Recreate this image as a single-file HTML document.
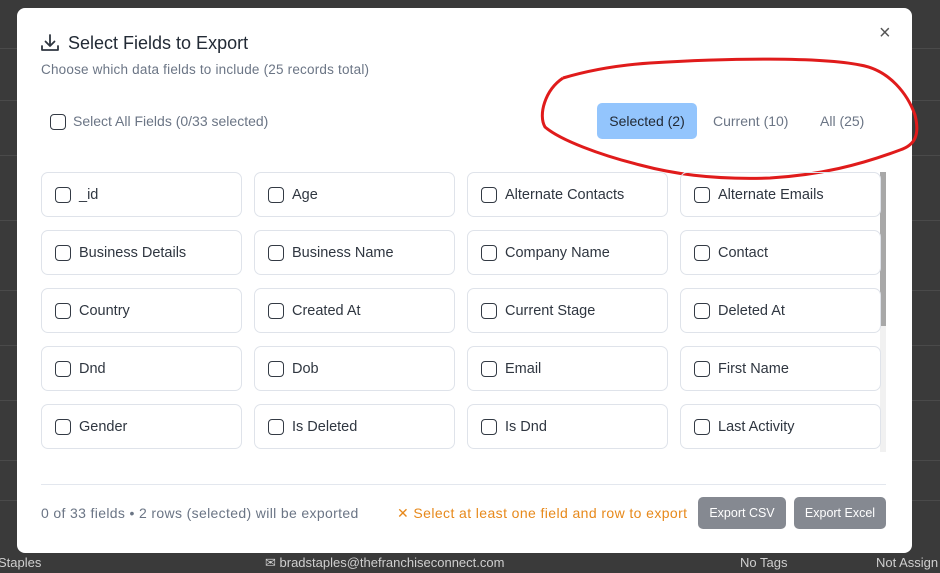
<!DOCTYPE html><html><head><style>
*{box-sizing:border-box}body{margin:0;width:940px;height:573px;background:#3a3a3a;font-family:"Liberation Sans",sans-serif;position:relative;overflow:hidden}
.bgrow{position:absolute;left:0;right:0;height:1px;background:#4a4a4a}
.bgt{position:absolute;color:#cfcfcf;font-size:13px}
.modal{position:absolute;left:17px;top:8px;width:895px;height:545px;background:#fff;border-radius:8px}
.t{position:absolute;white-space:nowrap}
.cb{position:absolute;width:16px;height:16px;border:1.5px solid #333a44;border-radius:4px}
.card{position:absolute;width:201px;height:45px;border:1px solid #dfe3ea;border-radius:7px}
.card .cb{left:13px;top:14px}
.card span{position:absolute;left:37px;top:14px;font-size:14.5px;color:#2f3640}
.btn{position:absolute;height:32px;top:497px;background:#858991;color:#fff;font-size:12.5px;border-radius:5px;text-align:center;line-height:32px}
</style></head><body>
<div class="bgrow" style="top:48px"></div><div class="bgrow" style="top:100px"></div><div class="bgrow" style="top:155px"></div><div class="bgrow" style="top:220px"></div><div class="bgrow" style="top:290px"></div><div class="bgrow" style="top:345px"></div><div class="bgrow" style="top:400px"></div><div class="bgrow" style="top:460px"></div><div class="bgrow" style="top:500px"></div>
<div class="bgt" style="left:-2px;top:555px">Staples</div>
<div class="bgt" style="left:265px;top:555px">✉ bradstaples@thefranchiseconnect.com</div>
<div class="bgt" style="left:740px;top:555px">No Tags</div>
<div class="bgt" style="left:876px;top:555px">Not Assign</div>
<div class="modal"></div>
<svg class="t" style="left:40px;top:33px" width="20" height="20" viewBox="0 0 20 20" fill="none" stroke="#2f3640" stroke-width="1.8" stroke-linecap="round" stroke-linejoin="round"><path d="M10 2v11M5.5 8.5L10 13l4.5-4.5M2 13v4h16v-4"/></svg>
<div class="t" style="left:68px;top:33px;font-size:18px;color:#222a35">Select Fields to Export</div>
<div class="t" style="left:41px;top:62px;font-size:13.5px;color:#6b7585;letter-spacing:0.2px">Choose which data fields to include (25 records total)</div>
<div class="t" style="left:879px;top:22px;font-size:20px;color:#555">×</div>
<div class="cb" style="left:50px;top:114px"></div>
<div class="t" style="left:73px;top:113px;font-size:14px;color:#6b7585">Select All Fields (0/33 selected)</div>
<div class="t" style="left:597px;top:103px;width:100px;height:36px;background:#93c5fd;border-radius:5px;font-size:14px;color:#222a35;text-align:center;line-height:36px">Selected (2)</div>
<div class="t" style="left:713px;top:113px;font-size:14px;color:#6b7585">Current (10)</div>
<div class="t" style="left:820px;top:113px;font-size:14px;color:#6b7585">All (25)</div>
<svg class="t" style="left:530px;top:55px" width="400" height="135" viewBox="0 0 400 135" fill="none" stroke="#e01b1b" stroke-width="3"><path d="M33 23C60 15 90 10 120 8C200 3 290 2 330 10C360 15 378 40 385 60C390 80 385 90 370 95C330 110 290 120 240 123C180 125 140 118 110 110C70 100 30 85 15 72C8 60 15 35 33 23"/></svg>
<div style="position:absolute;left:880px;top:172px;width:6px;height:280px;background:#f1f1f1"></div>
<div style="position:absolute;left:880px;top:172px;width:6px;height:154px;background:#a8a8a8"></div>
<div class="card" style="left:41px;top:172px"><i class="cb"></i><span>_id</span></div>
<div class="card" style="left:254px;top:172px"><i class="cb"></i><span>Age</span></div>
<div class="card" style="left:467px;top:172px"><i class="cb"></i><span>Alternate Contacts</span></div>
<div class="card" style="left:680px;top:172px"><i class="cb"></i><span>Alternate Emails</span></div>
<div class="card" style="left:41px;top:230px"><i class="cb"></i><span>Business Details</span></div>
<div class="card" style="left:254px;top:230px"><i class="cb"></i><span>Business Name</span></div>
<div class="card" style="left:467px;top:230px"><i class="cb"></i><span>Company Name</span></div>
<div class="card" style="left:680px;top:230px"><i class="cb"></i><span>Contact</span></div>
<div class="card" style="left:41px;top:288px"><i class="cb"></i><span>Country</span></div>
<div class="card" style="left:254px;top:288px"><i class="cb"></i><span>Created At</span></div>
<div class="card" style="left:467px;top:288px"><i class="cb"></i><span>Current Stage</span></div>
<div class="card" style="left:680px;top:288px"><i class="cb"></i><span>Deleted At</span></div>
<div class="card" style="left:41px;top:346px"><i class="cb"></i><span>Dnd</span></div>
<div class="card" style="left:254px;top:346px"><i class="cb"></i><span>Dob</span></div>
<div class="card" style="left:467px;top:346px"><i class="cb"></i><span>Email</span></div>
<div class="card" style="left:680px;top:346px"><i class="cb"></i><span>First Name</span></div>
<div class="card" style="left:41px;top:404px"><i class="cb"></i><span>Gender</span></div>
<div class="card" style="left:254px;top:404px"><i class="cb"></i><span>Is Deleted</span></div>
<div class="card" style="left:467px;top:404px"><i class="cb"></i><span>Is Dnd</span></div>
<div class="card" style="left:680px;top:404px"><i class="cb"></i><span>Last Activity</span></div>
<div style="position:absolute;left:41px;top:484px;width:845px;height:1px;background:#e3e7ee"></div>
<div class="t" style="left:41px;top:505px;font-size:14px;color:#6b7585;letter-spacing:0.35px">0 of 33 fields • 2 rows (selected) will be exported</div>
<div class="t" style="left:397px;top:505px;font-size:14px;color:#e7891b;letter-spacing:0.4px">✕ Select at least one field and row to export</div>
<div class="btn" style="left:698px;width:88px">Export CSV</div>
<div class="btn" style="left:794px;width:92px">Export Excel</div>
</body></html>
